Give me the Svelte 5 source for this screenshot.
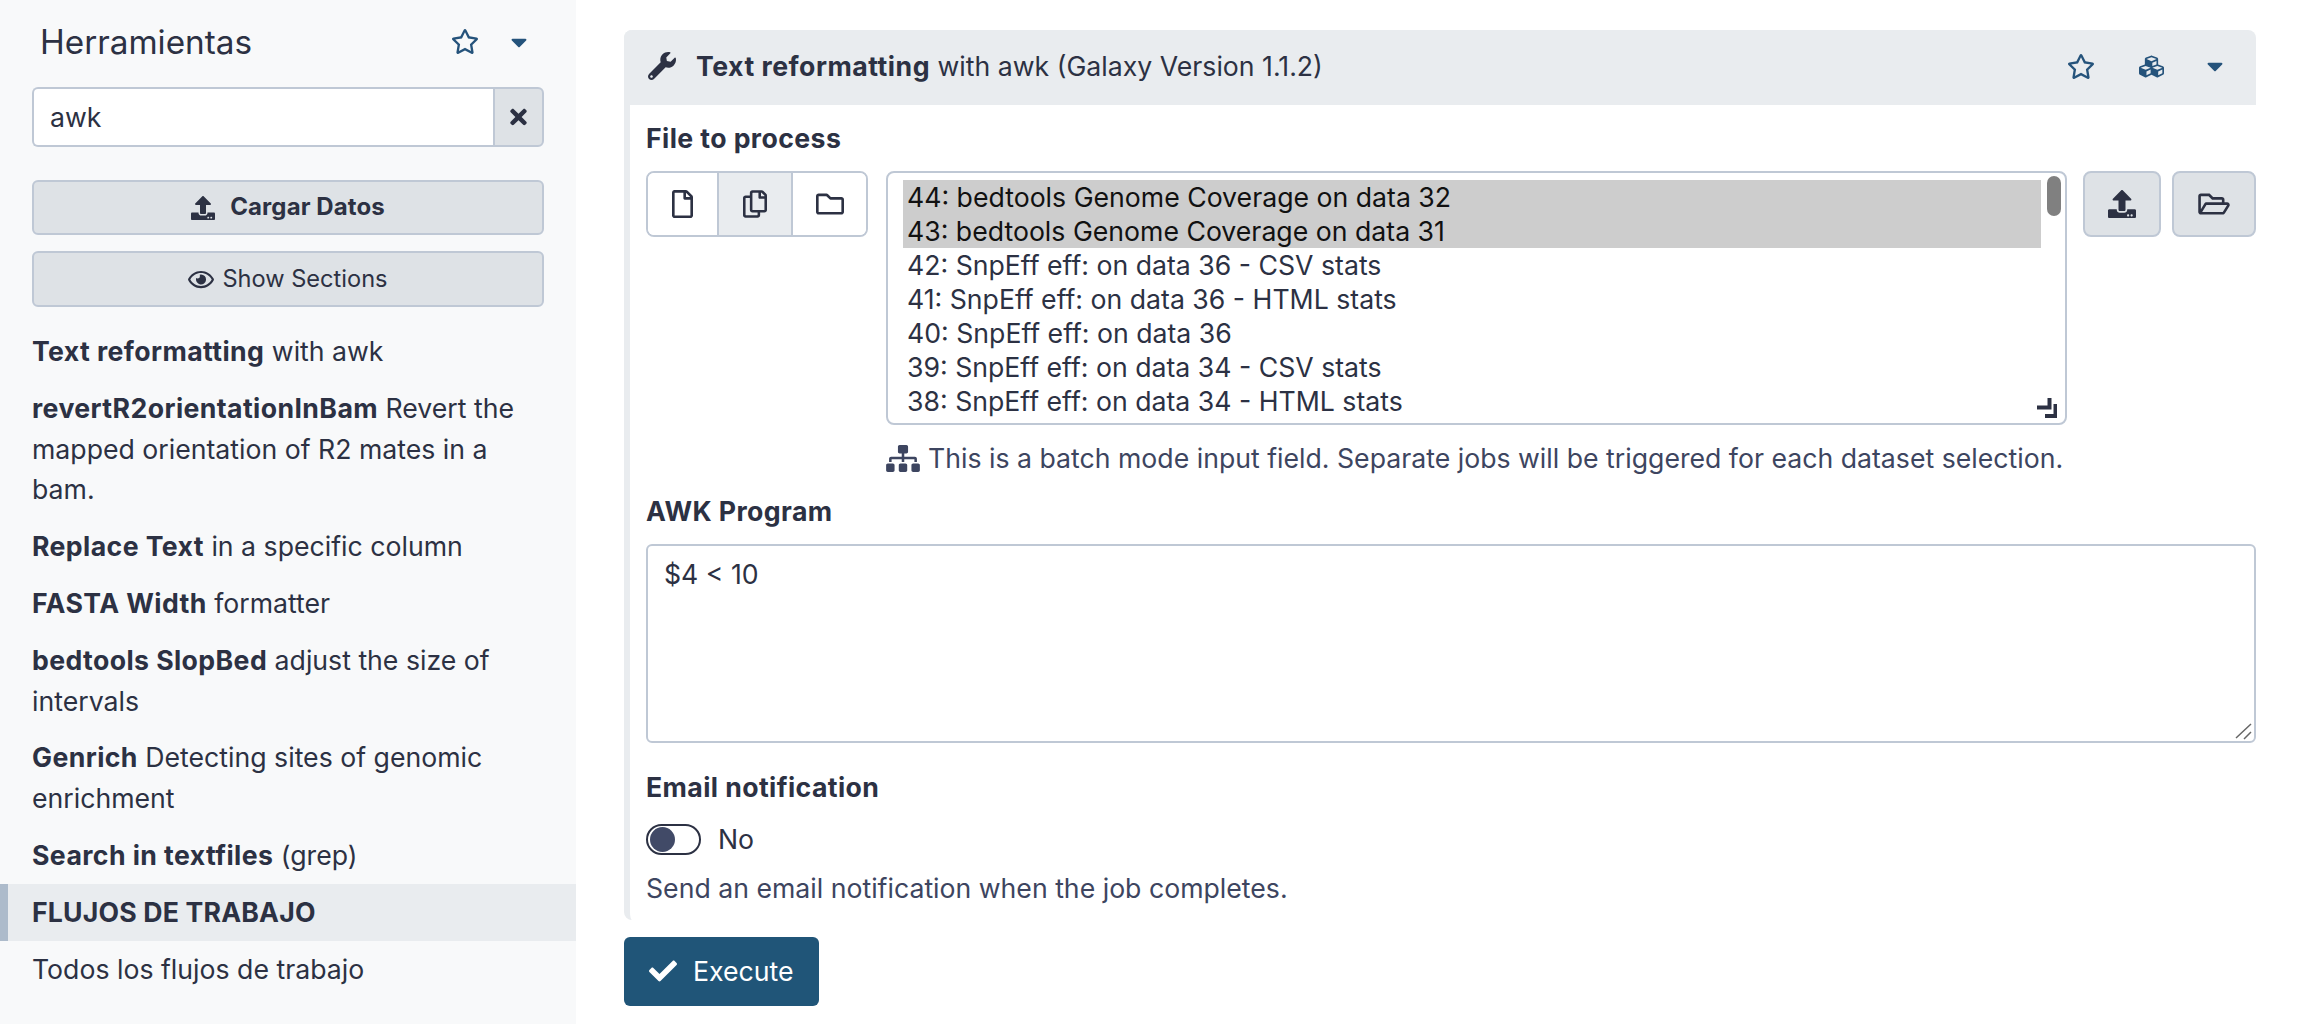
<script>
  const tools = [
    { name: 'Text reformatting', desc: 'with awk' },
    { name: 'revertR2orientationInBam', desc: 'Revert the mapped orientation of R2 mates in a bam.' },
    { name: 'Replace Text', desc: 'in a specific column' },
    { name: 'FASTA Width', desc: 'formatter' },
    { name: 'bedtools SlopBed', desc: 'adjust the size of intervals' },
    { name: 'Genrich', desc: 'Detecting sites of genomic enrichment' },
    { name: 'Search in textfiles', desc: '(grep)' }
  ];

  const datasets = [
    { label: '44: bedtools Genome Coverage on data 32', selected: true },
    { label: '43: bedtools Genome Coverage on data 31', selected: true },
    { label: '42: SnpEff eff: on data 36 - CSV stats' },
    { label: '41: SnpEff eff: on data 36 - HTML stats' },
    { label: '40: SnpEff eff: on data 36' },
    { label: '39: SnpEff eff: on data 34 - CSV stats' },
    { label: '38: SnpEff eff: on data 34 - HTML stats' },
    { label: '37: SnpEff eff: on data 34' }
  ];

  const star = 'M528.1 171.5L382 150.2 316.7 17.8c-11.7-23.6-45.6-23.9-57.4 0L194 150.2 47.9 171.5c-26.2 3.8-36.7 36.1-17.7 54.6l105.7 103-25 145.5c-4.5 26.3 23.2 46 46.4 33.7L288 439.6l130.7 68.7c23.2 12.2 50.9-7.4 46.4-33.7l-25-145.5 105.7-103c19-18.5 8.5-50.8-17.7-54.6zM388.6 312.3l23.7 138.4L288 385.4l-124.3 65.3 23.7-138.4-100.6-98 139-20.2 62.2-126 62.2 126 139 20.2-100.6 98z';
  const caret = 'M31.3 192h257.3c17.8 0 26.7 21.5 14.1 34.1L174.1 354.8c-7.8 7.8-20.5 7.8-28.3 0L17.2 226.1C4.6 213.5 13.5 192 31.3 192z';
  const upload = 'M296 384h-80c-13.3 0-24-10.7-24-24V192h-87.7c-17.8 0-26.7-21.5-14.1-34.1L242.3 5.7c7.5-7.5 19.8-7.5 27.3 0l152.2 152.2c12.6 12.6 3.7 34.1-14.1 34.1H320v168c0 13.3-10.7 24-24 24zm216-8v112c0 13.3-10.7 24-24 24H24c-13.3 0-24-10.7-24-24V376c0-13.3 10.7-24 24-24h136v8c0 30.9 25.1 56 56 56h80c30.9 0 56-25.1 56-56v-8h136c13.3 0 24 10.7 24 24zm-124 88c0-11-9-20-20-20s-20 9-20 20 9 20 20 20 20-9 20-20zm64 0c0-11-9-20-20-20s-20 9-20 20 9 20 20 20 20-9 20-20z';
</script>

<div class="page">
  <aside class="sidebar">
    <div class="panel-head">
      <h2>Herramientas</h2>
      <button class="plain star" aria-label="favorites">
        <svg viewBox="0 0 576 512" width="28" height="25"><path d={star} /></svg>
      </button>
      <button class="plain caret" aria-label="options">
        <svg viewBox="0 0 320 512" width="16" height="26"><path d={caret} /></svg>
      </button>
    </div>

    <div class="search">
      <div class="search-input">awk</div>
      <button class="search-clear" aria-label="clear">
        <svg viewBox="0 0 352 512" width="17" height="24"><path d="M242.72 256l100.07-100.07c12.28-12.28 12.28-32.19 0-44.48l-22.24-22.24c-12.28-12.28-32.19-12.28-44.48 0L176 189.28 75.93 89.21c-12.28-12.28-32.19-12.28-44.48 0L9.21 111.45c-12.28 12.28-12.28 32.19 0 44.48L109.28 256 9.21 356.07c-12.28 12.28-12.28 32.19 0 44.48l22.24 22.24c12.28 12.28 32.2 12.28 44.48 0L176 322.72l100.07 100.07c12.28 12.28 32.2 12.28 44.48 0l22.24-22.24c12.28-12.28 12.28-32.19 0-44.48L242.72 256z" /></svg>
      </button>
    </div>

    <button class="wide upload-btn">
      <svg viewBox="0 0 512 512" width="24" height="24"><path d={upload} /></svg>
      <span>Cargar Datos</span>
    </button>
    <button class="wide sections-btn">
      <svg viewBox="0 0 576 512" width="26" height="23"><path d="M288 144a110.94 110.94 0 0 0-31.24 5 55.4 55.4 0 0 1 7.24 27 56 56 0 0 1-56 56 55.4 55.4 0 0 1-27-7.24A111.71 111.71 0 1 0 288 144zm284.52 97.4C518.29 135.59 410.93 64 288 64S57.68 135.64 3.48 241.41a32.35 32.35 0 0 0 0 29.19C57.71 376.41 165.07 448 288 448s230.32-71.64 284.52-177.41a32.35 32.35 0 0 0 0-29.19zM288 400c-98.65 0-189.09-55-237.93-144C98.91 167 189.34 112 288 112s189.09 55 237.93 144C477.1 345 386.66 400 288 400z" /></svg>
      <span>Show Sections</span>
    </button>

    <ul class="tool-list">
      {#each tools as tool}
        <li><b>{tool.name}</b> {tool.desc}</li>
      {/each}
      <li class="section-title">FLUJOS DE TRABAJO</li>
      <li>Todos los flujos de trabajo</li>
    </ul>
  </aside>

  <main class="center">
    <section class="portlet">
      <header class="portlet-head">
        <svg class="wrench" viewBox="0 0 512 512" width="28" height="28"><path d="M507.73 109.1c-2.24-9.03-13.54-12.09-20.12-5.51l-74.36 74.36-67.88-11.31-11.31-67.88 74.36-74.36c6.62-6.62 3.43-17.9-5.66-20.16-47.38-11.74-99.55.91-136.58 37.93-39.64 39.64-50.55 97.1-34.05 147.2L18.74 402.76c-24.99 24.99-24.99 65.51 0 90.5 24.99 24.99 65.51 24.99 90.5 0l213.21-213.21c50.12 16.71 107.47 5.68 147.37-34.22 37.07-37.07 49.7-89.32 37.91-136.73zM64 472c-13.25 0-24-10.75-24-24 0-13.26 10.75-24 24-24s24 10.74 24 24c0 13.25-10.75 24-24 24z" /></svg>
        <div class="portlet-title"><b>Text reformatting</b> with awk (Galaxy Version 1.1.2)</div>
        <div class="head-actions">
          <svg viewBox="0 0 576 512" width="28" height="25"><path d={star} /></svg>
          <svg viewBox="0 0 512 512" width="25" height="25"><path d="M488.6 250.2L392 214V105.5c0-15-9.3-28.4-23.4-33.7l-100-37.5c-8.1-3.1-17.1-3.1-25.3 0l-100 37.5c-14.1 5.3-23.4 18.7-23.4 33.7V214l-96.6 36.2C9.3 255.5 0 268.9 0 283.9V394c0 13.6 7.7 26.1 19.9 32.2l100 50c10.1 5.1 22.1 5.1 32.2 0l103.9-52 103.9 52c10.1 5.1 22.1 5.1 32.2 0l100-50c12.2-6.1 19.9-18.6 19.9-32.2V283.9c0-15-9.3-28.4-23.4-33.7zM358 214.8l-85 31.9v-68.2l85-37v73.3zM154 104.1l102-38.2 102 38.2v.6l-102 41.4-102-41.4v-.6zm84 291.1l-85 42.5v-79.1l85-38.8v75.4zm0-112l-102 41.4-102-41.4v-.6l102-38.2 102 38.2v.6zm240 112l-85 42.5v-79.1l85-38.8v75.4zm0-112l-102 41.4-102-41.4v-.6l102-38.2 102 38.2v.6z" /></svg>
          <svg viewBox="0 0 320 512" width="16" height="26"><path d={caret} /></svg>
        </div>
      </header>

      <div class="portlet-body">
        <div class="field-label first">File to process</div>
        <div class="file-row">
          <div class="mode-group">
            <button aria-label="single dataset">
              <svg viewBox="0 0 384 512" width="21" height="28"><path d="M369.9 97.9L286 14C277 5 264.8-.1 252.1-.1H48C21.5 0 0 21.5 0 48v416c0 26.5 21.5 48 48 48h288c26.5 0 48-21.5 48-48V131.9c0-12.7-5.1-25-14.1-34zM332.1 128H256V51.9l76.1 76.1zM48 464V48h160v104c0 13.3 10.7 24 24 24h104v288H48z" /></svg>
            </button>
            <button class="active" aria-label="multiple datasets">
              <svg viewBox="0 0 448 512" width="24" height="28"><path d="M433.941 65.941l-51.882-51.882A48 48 0 0 0 348.118 0H176c-26.51 0-48 21.49-48 48v48H48c-26.51 0-48 21.49-48 48v320c0 26.51 21.49 48 48 48h224c26.51 0 48-21.49 48-48v-48h80c26.51 0 48-21.49 48-48V99.882a48 48 0 0 0-14.059-33.941zM266 464H54a6 6 0 0 1-6-6V150a6 6 0 0 1 6-6h74v224c0 26.51 21.49 48 48 48h96v42a6 6 0 0 1-6 6zm128-96H182a6 6 0 0 1-6-6V54a6 6 0 0 1 6-6h106v88c0 13.255 10.745 24 24 24h88v202a6 6 0 0 1-6 6zm6-256h-64V48h9.632c1.591 0 3.117.632 4.243 1.757l48.368 48.368a6 6 0 0 1 1.757 4.243V112z" /></svg>
            </button>
            <button aria-label="collection">
              <svg viewBox="0 0 512 512" width="28" height="28"><path d="M464 128H272l-54.63-54.63c-6-6-14.14-9.37-22.63-9.37H48C21.49 64 0 85.49 0 112v288c0 26.51 21.49 48 48 48h416c26.51 0 48-21.49 48-48V176c0-26.51-21.49-48-48-48zm0 272H48V112h140.12l54.63 54.63c6 6 14.14 9.37 22.63 9.37H464v224z" /></svg>
            </button>
          </div>

          <div class="select-col">
            <div class="dataset-select">
              {#each datasets as d}
                <div class="option" class:selected={d.selected}>{d.label}</div>
              {/each}
              <div class="thumb"></div>
              <svg class="resize" viewBox="0 0 20 20" width="20" height="20"><path d="M0 9.5h12.5V0M8 18h10.5V6" /></svg>
            </div>
            <div class="batch-note">
              <svg viewBox="0 0 640 512" width="34" height="27"><path d="M128 352H32c-17.67 0-32 14.33-32 32v96c0 17.67 14.33 32 32 32h96c17.67 0 32-14.33 32-32v-96c0-17.67-14.33-32-32-32zm-24-80h192v48h48v-48h192v48h48v-57.59c0-21.17-17.23-38.41-38.41-38.41H344v-64h40c17.67 0 32-14.33 32-32V32c0-17.67-14.33-32-32-32H256c-17.67 0-32 14.33-32 32v96c0 17.67 14.33 32 32 32h40v64H94.41C73.23 224 56 241.23 56 262.41V320h48v-48zm264 80h-96c-17.67 0-32 14.33-32 32v96c0 17.67 14.33 32 32 32h96c17.67 0 32-14.33 32-32v-96c0-17.67-14.33-32-32-32zm240 0h-96c-17.67 0-32 14.33-32 32v96c0 17.67 14.33 32 32 32h96c17.67 0 32-14.33 32-32v-96c0-17.67-14.33-32-32-32z" /></svg>
              <span>This is a batch mode input field. Separate jobs will be triggered for each dataset selection.</span>
            </div>
          </div>

          <button class="side-btn up" aria-label="upload">
            <svg viewBox="0 0 512 512" width="28" height="28"><path d={upload} /></svg>
          </button>
          <button class="side-btn browse" aria-label="browse">
            <svg viewBox="0 0 576 512" width="32" height="28"><path d="M527.9 224H480v-48c0-26.5-21.5-48-48-48H272l-64-64H48C21.5 64 0 85.5 0 112v288c0 26.5 21.5 48 48 48h400c16.5 0 31.9-8.5 40.7-22.6l79.9-128c20-31.9-3-73.4-40.7-73.4zM48 118c0-3.3 2.7-6 6-6h134.1l64 64H426c3.3 0 6 2.7 6 6v42H152c-16.8 0-32.4 8.8-41.1 23.2L48 351.4zm400 282H72l77.2-128H528z" /></svg>
          </button>
        </div>

        <div class="field-label awk">AWK Program</div>
        <div class="program">
          $4 &lt; 10
          <svg class="grip" viewBox="0 0 20 20" width="20" height="20"><path d="M2 17L17 3M10 18L17 11" /></svg>
        </div>

        <div class="field-label email">Email notification</div>
        <div class="switch-row">
          <span class="switch"><span class="knob"></span></span>
          <span>No</span>
        </div>
        <div class="help">Send an email notification when the job completes.</div>
      </div>
    </section>

    <button class="execute">
      <svg viewBox="0 0 512 512" width="28" height="28"><path d="M173.898 439.404l-166.4-166.4c-9.997-9.997-9.997-26.206 0-36.204l36.203-36.204c9.997-9.998 26.207-9.998 36.204 0L192 312.69 432.095 72.596c9.997-9.997 26.207-9.997 36.204 0l36.203 36.204c9.997 9.997 9.997 26.206 0 36.204l-294.4 294.401c-9.998 9.997-26.207 9.997-36.204-.001z" /></svg>
      <span>Execute</span>
    </button>
  </main>
</div>

<style>
:global(body) {
  margin: 0;
  background: #fff;
  overflow: hidden;
}

.page {
  display: flex;
  width: 2298px;
  height: 1024px;
  overflow: hidden;
  font-family: Inter, "Liberation Sans", sans-serif;
  font-size: 26.67px;
  line-height: 40.8px;
  color: #2c3143;
}

button {
  font: inherit;
  color: inherit;
  padding: 0;
  cursor: pointer;
}

svg {
  display: block;
  fill: currentColor;
  flex: none;
}

/* Left tool panel */
.sidebar {
  width: 576px;
  flex: none;
  box-sizing: border-box;
  background: #f8f9fa;
}

.panel-head {
  display: flex;
  align-items: center;
  height: 87px;
  padding: 0 49px 4px 40px;
  box-sizing: border-box;
}

.panel-head h2 {
  flex: 1;
  margin: 0;
  padding-top: 2px;
  font-size: 33.3px;
  font-weight: 400;
}

.plain {
  border: none;
  background: none;
  color: #25537b;
}

.plain.star {
  margin-right: 32px;
}

.search {
  display: flex;
  height: 60px;
  margin: 0 32px;
  box-sizing: border-box;
}

.search-input {
  flex: 1;
  display: flex;
  align-items: center;
  padding-left: 16px;
  background: #fff;
  border: 2px solid #bfc8d5;
  border-right: none;
  border-radius: 6px 0 0 6px;
}

.search-clear {
  width: 51px;
  display: flex;
  align-items: center;
  justify-content: center;
  background: #dee2e6;
  border: 2px solid #bfc8d5;
  border-radius: 0 6px 6px 0;
}

.wide {
  display: flex;
  align-items: center;
  justify-content: center;
  box-sizing: border-box;
  width: 512px;
  margin-left: 32px;
  background: #dee2e6;
  border: 2px solid #bfc8d5;
  border-radius: 6px;
}

.upload-btn {
  height: 55px;
  margin-top: 33px;
  gap: 15px;
  font-size: 24px;
  font-weight: 700;
  letter-spacing: 0.1px;
}

.sections-btn {
  height: 56px;
  margin-top: 16px;
  gap: 8px;
  font-size: 23.6px;
}

.tool-list {
  list-style: none;
  margin: 16px 0 0;
  padding: 0;
}

.tool-list li {
  padding: 8px 32px;
}

.tool-list b {
  font-weight: 700;
  letter-spacing: 0.4px;
}

.tool-list .section-title {
  padding-left: 24px;
  background: #e9ecef;
  border-left: 8px solid #adbbcb;
  font-weight: 700;
  letter-spacing: 0.17px;
}

/* Main column */
.center {
  flex: 1;
  min-width: 0;
  padding: 30px 42px 0 48px;
}

.portlet {
  border-left: 6px solid #e9ecef;
  border-radius: 8px 8px 0 8px;
}

.portlet-head {
  display: flex;
  align-items: center;
  height: 75px;
  box-sizing: border-box;
  margin-left: -6px;
  padding: 0 33px 3px 24px;
  background: #e9ecef;
  border-radius: 8px 8px 0 0;
}

.wrench {
  margin-right: 20px;
}

.portlet-title {
  flex: 1;
}

.portlet-title b {
  letter-spacing: 0.5px;
}

.head-actions {
  display: flex;
  align-items: center;
  gap: 43.5px;
  color: #25537b;
}

.portlet-body {
  padding-left: 16px;
  padding-bottom: 11px;
}

.field-label {
  font-weight: 700;
  letter-spacing: 0.4px;
}

.field-label.first {
  margin-top: 13px;
  margin-bottom: 12.2px;
}

.file-row {
  display: flex;
  align-items: flex-start;
}

.mode-group {
  display: flex;
  width: 222px;
  height: 66px;
  box-sizing: border-box;
  border: 2px solid #bfc8d5;
  border-radius: 8px;
  overflow: hidden;
  margin-right: 18px;
}

.mode-group button {
  flex: 1;
  display: flex;
  align-items: center;
  justify-content: center;
  background: #fff;
  border: none;
  border-left: 2px solid #bfc8d5;
}

.mode-group button:first-child {
  flex: none;
  width: 69px;
  border-left: none;
}

.mode-group button:nth-child(2) {
  flex: none;
  width: 74px;
}

.mode-group .active {
  background: #e9ecef;
}

.select-col {
  width: 1181px;
  flex: none;
}

.dataset-select {
  position: relative;
  height: 254px;
  box-sizing: border-box;
  padding: 7px 0 0 15px;
  border: 2px solid #bfc8d5;
  border-radius: 8px;
  overflow: hidden;
  line-height: 34px;
}

.option {
  width: 1138px;
  padding-left: 4px;
  box-sizing: border-box;
  white-space: nowrap;
}

.option.selected {
  background: #cdcdcd;
  color: #111;
}

.thumb {
  position: absolute;
  top: 3px;
  right: 4px;
  width: 14px;
  height: 40px;
  border-radius: 7px;
  background: #808080;
}

.resize {
  position: absolute;
  right: 8px;
  bottom: 5px;
  fill: none;
  stroke: #2c3143;
  stroke-width: 4;
}

.batch-note {
  display: flex;
  align-items: center;
  gap: 8px;
  margin-top: 13px;
  color: #3d4560;
  white-space: nowrap;
}

.side-btn {
  height: 66px;
  display: flex;
  align-items: center;
  justify-content: center;
  box-sizing: border-box;
  background: #dee2e6;
  border: 2px solid #bfc8d5;
  border-radius: 8px;
}

.side-btn.up {
  width: 78px;
  margin-left: 16px;
}

.side-btn.browse {
  width: 84px;
  margin-left: 11px;
}

.field-label.awk {
  margin-top: 12px;
  margin-bottom: 12.4px;
}

.program {
  position: relative;
  height: 199px;
  box-sizing: border-box;
  padding: 8px 16px;
  border: 2px solid #bfc8d5;
  border-radius: 6px;
}

.grip {
  position: absolute;
  right: 0;
  bottom: 0;
  fill: none;
  stroke: #666;
  stroke-width: 1.5;
}

.field-label.email {
  margin-top: 24px;
  margin-bottom: 16px;
}

.switch-row {
  display: flex;
  align-items: center;
  gap: 17px;
  height: 31px;
}

.switch {
  display: flex;
  align-items: center;
  width: 55px;
  height: 31px;
  box-sizing: border-box;
  padding-left: 2px;
  border: 2px solid #2c3143;
  border-radius: 16px;
}

.knob {
  width: 25px;
  height: 25px;
  border-radius: 50%;
  background: #414a67;
}

.help {
  margin-top: 13px;
  color: #3d4560;
}

.execute {
  display: flex;
  align-items: center;
  gap: 16px;
  width: 195px;
  height: 69px;
  margin-top: 17px;
  padding-left: 25px;
  box-sizing: border-box;
  background: #205578;
  color: #fff;
  border: none;
  border-radius: 6px;
}
</style>
